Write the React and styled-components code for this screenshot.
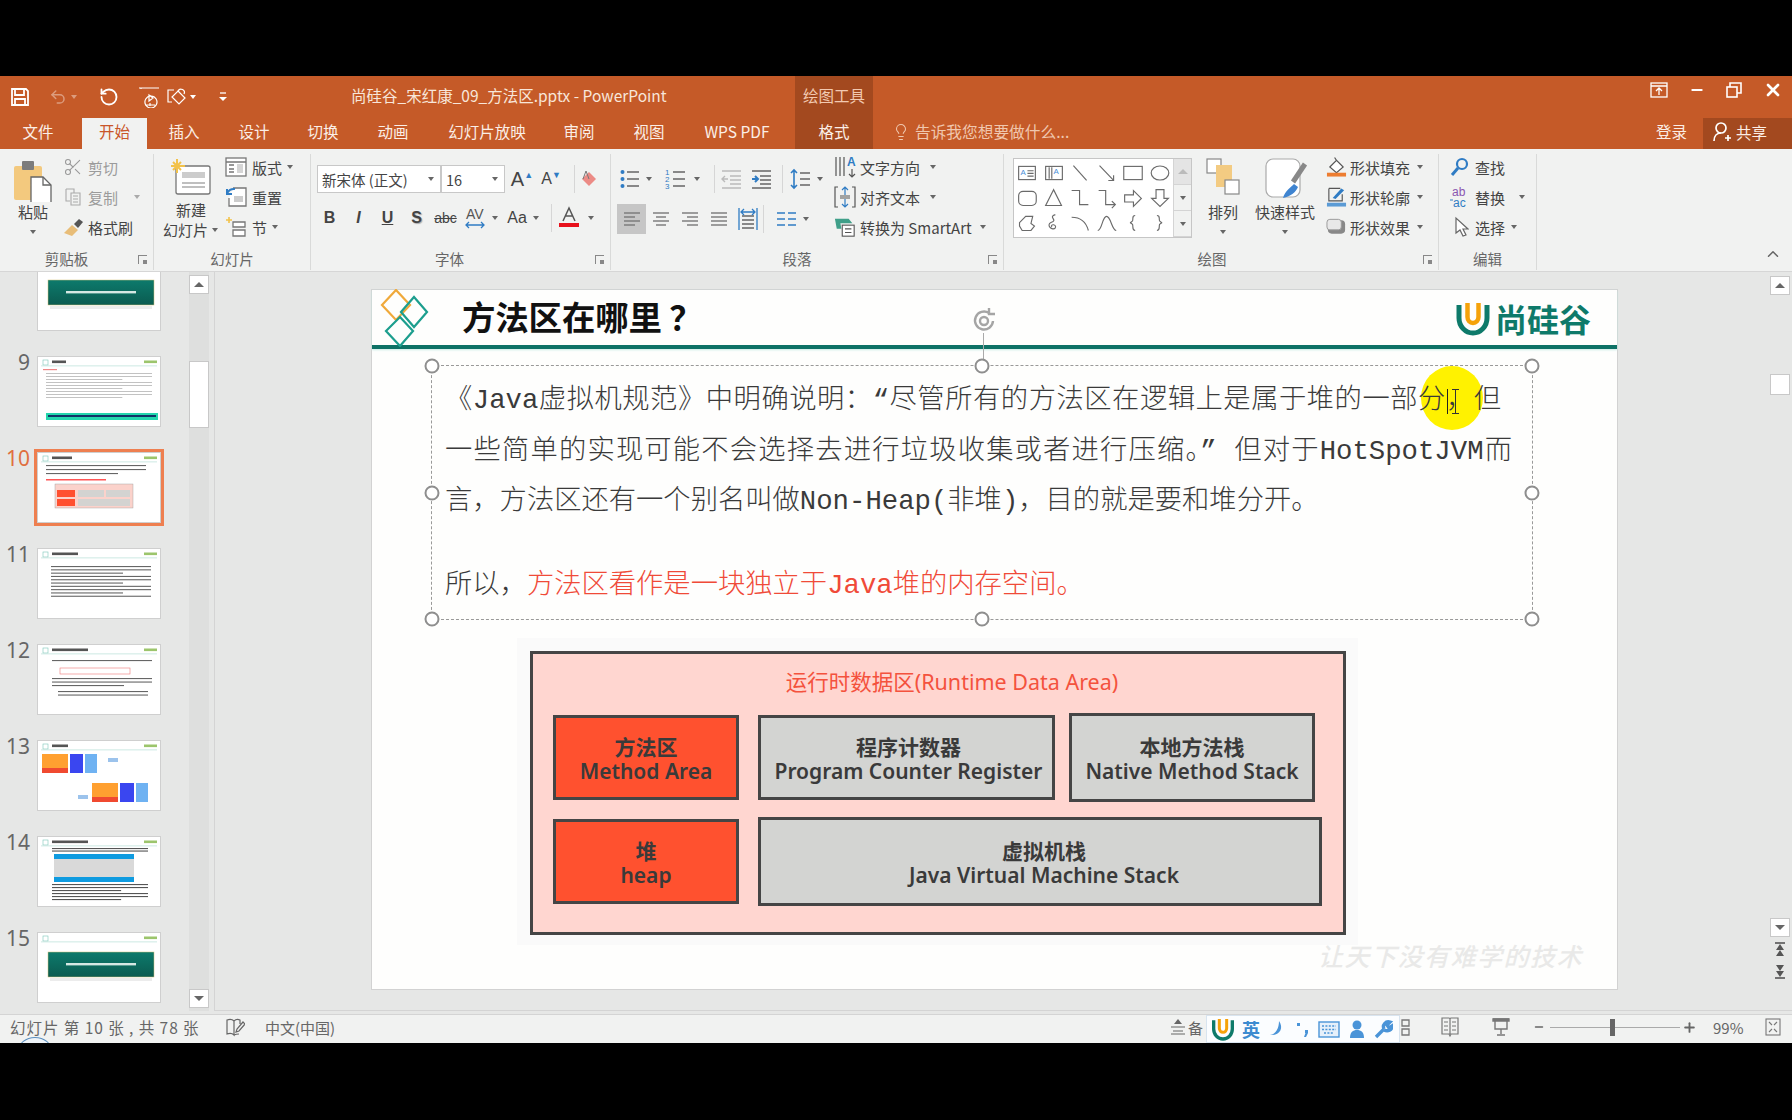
import React from "react";
import styled, { createGlobalStyle } from "styled-components";
import { Undo2, RotateCcw, Scissors, Lightbulb, X, Minus, ChevronUp, Plus } from "lucide-react";

const GlobalStyle = createGlobalStyle`
  html, body { margin: 0; padding: 0; background: #000; }
  * { box-sizing: border-box; }
  body { font-family: "Noto Sans CJK SC", "Noto Sans", sans-serif; }
`;

const Page = styled.div`
  width: 1792px;
  height: 1120px;
  padding-top: 76px;
  background: #000;
  overflow: hidden;
`;
const Win = styled.div`
  width: 1792px;
  height: 967px;
  display: flex;
  flex-direction: column;
  background: #e6e7e6;
`;

/* title bar + tabs */
const TitleBar = styled.div`
  height: 42px;
  display: flex;
  background: #c55a28;
  color: #f8e6da;
`;
const Qat = styled.div`
  width: 351px;
  padding-left: 10px;
  display: flex;
  align-items: center;
  color: #fff;
`;
const QatItem = styled.div`
  width: ${p => p.$w || 24}px;
  margin-left: ${p => p.$ml || 0}px;
  display: flex;
  align-items: center;
  justify-content: center;
  opacity: ${p => (p.$off ? 0.4 : 1)};
`;
const DocTitle = styled.div`
  width: 444px;
  font-size: 15.5px;
  line-height: 38px;
  white-space: nowrap;
`;
const ToolTitle = styled.div`
  width: 78px;
  text-align: center;
  font-size: 15.5px;
  line-height: 38px;
  background: #a3491f;
  color: #f2c9b1;
`;
const WinCtrls = styled.div`
  margin-left: auto;
  display: flex;
  align-items: center;
  padding: 0 9px 14px 0;
  gap: 21px;
  color: #fff;
`;
const TabBar = styled.div`
  height: 31px;
  display: flex;
  background: #c55a28;
  color: #fbeee6;
`;
const Tab = styled.div`
  width: ${p => p.$w}px;
  padding-right: ${p => p.$pr || 0}px;
  text-align: center;
  font-size: 15.5px;
  line-height: 26px;
  white-space: nowrap;
  background: ${p => (p.$active ? "#f1f2f1" : p.$tool ? "#a3491f" : "transparent")};
  color: ${p => (p.$active ? "#c9562a" : "#fbeee6")};
`;
const Hint = styled.div`
  margin-left: 19px;
  padding-bottom: 4px;
  display: flex;
  align-items: center;
  gap: 5px;
  font-size: 15.7px;
  color: #f0c7ae;
`;
const Login = styled.div`
  margin-left: auto;
  width: 47px;
  font-size: 15.5px;
  line-height: 26px;
`;
const Share = styled.div`
  width: 89px;
  display: flex;
  align-items: center;
  gap: 4px;
  padding: 0 0 3px 9px;
  font-size: 15.5px;
  background: #a3491f;
`;

/* ribbon */
const Ribbon = styled.div`
  position: relative;
  height: 123px;
  padding-top: 5px;
  display: flex;
  background: #f1f2f1;
  border-bottom: 1px solid #d6d6d6;
  color: #444;
`;
const Group = styled.div`
  position: relative;
  width: ${p => p.$w}px;
  height: 116px;
  display: flex;
  flex-direction: column;
  border-right: 1px solid #d9dad9;
`;
const Body = styled.div`
  height: 95px;
  display: flex;
  padding-left: ${p => p.$pl || 0}px;
`;
const GroupLabel = styled.div`
  height: 21px;
  padding-right: ${p => p.$pr || 0}px;
  text-align: center;
  font-size: 14.5px;
  line-height: 20px;
  color: #666;
`;
const Launcher = styled.div`
  position: absolute;
  right: 6px;
  bottom: 6px;
  width: 9px;
  height: 9px;
  border-left: 1px solid #888;
  border-top: 1px solid #888;
  &::after {
    content: "";
    position: absolute;
    right: 0;
    bottom: 0;
    width: 4px;
    height: 4px;
    background: #888;
  }
`;
const Big = styled.div`
  width: ${p => p.$w}px;
  margin-left: ${p => p.$ml || 0}px;
  display: flex;
  flex-direction: column;
  align-items: center;
  padding-top: ${p => p.$pt ?? 6}px;
  font-size: 15px;
  line-height: 20px;
  text-align: center;
  white-space: nowrap;
`;
const BigIcon = styled.div`
  height: 40px;
  margin-bottom: 2px;
`;
const BigLine = styled.div`
  height: 20px;
  margin-top: ${p => p.$mt || 0}px;
  display: flex;
  align-items: center;
  justify-content: center;
  gap: 3px;
`;
const Col = styled.div`
  width: ${p => (p.$w ? `${p.$w}px` : "auto")};
  margin-left: ${p => p.$ml || 0}px;
  display: flex;
  flex-direction: column;
`;
const Small = styled.div`
  height: 30px;
  padding-bottom: 4px;
  display: flex;
  align-items: center;
  gap: ${p => p.$gap ?? 4}px;
  font-size: 15px;
  white-space: nowrap;
  color: ${p => (p.$off ? "#9b9b9b" : "#444")};
`;
const IconBox = styled.div`
  width: ${p => p.$w || 22}px;
  display: flex;
  justify-content: center;
  align-items: center;
  flex: none;
`;
const Caret = styled.span`
  display: inline-flex;
  justify-content: center;
  width: ${p => p.$w || 10}px;
  margin-left: ${p => p.$ml || 0}px;
  flex: none;
  &::after {
    content: "";
    border-left: 3.5px solid transparent;
    border-right: 3.5px solid transparent;
    border-top: 4px solid ${p => (p.$off ? "#aaa" : p.$white ? "#fff" : "#666")};
  }
`;
const ToolRow = styled.div`
  display: flex;
  align-items: center;
  height: ${p => p.$h}px;
  margin-top: ${p => p.$mt || 0}px;
  margin-left: ${p => p.$ml || 0}px;
  padding-left: ${p => p.$pl || 0}px;
`;
const Tool = styled.div`
  width: ${p => p.$w || 28}px;
  height: 30px;
  margin-left: ${p => p.$ml || 0}px;
  display: flex;
  align-items: center;
  justify-content: center;
  flex: none;
  background: ${p => (p.$on ? "#c6c6c6" : "transparent")};
  font-family: "Liberation Sans", sans-serif;
  font-size: ${p => p.$fs || 16}px;
  font-weight: ${p => (p.$b ? 700 : 400)};
  font-style: ${p => (p.$i ? "italic" : "normal")};
  text-decoration: ${p => (p.$u ? "underline" : p.$s ? "line-through" : "none")};
  text-shadow: ${p => (p.$shadow ? "1px 1px 1px #aaa" : "none")};
`;
const GrowMark = styled.sup`
  font-size: 9px;
  color: #2f7cc4;
  margin-top: -8px;
`;
const Sep = styled.div`
  width: 1px;
  height: 28px;
  margin-left: ${p => p.$ml || 0}px;
  background: #d6d6d6;
  flex: none;
`;
const Combo = styled.div`
  width: ${p => p.$w}px;
  height: 28px;
  margin-left: ${p => p.$ml || 0}px;
  padding: 0 4px 0 4px;
  display: flex;
  align-items: center;
  justify-content: space-between;
  background: #fff;
  border: 1px solid #c8c8c8;
  font-size: 14.5px;
  white-space: nowrap;
  flex: none;
`;
const Gallery = styled.div`
  width: 179px;
  height: 80px;
  margin: 4px 0 0 9px;
  display: flex;
  background: #fff;
  border: 1px solid #c6c6c6;
`;
const ShapeGrid = styled.div`
  flex: 1;
  display: grid;
  grid-template-columns: repeat(6, 1fr);
  grid-template-rows: repeat(3, 1fr);
  padding: 1px 0;
  place-items: center;
  color: #666;
`;
const GalleryScroll = styled.div`
  width: 18px;
  display: flex;
  flex-direction: column;
  border-left: 1px solid #d4d4d4;
  background: #f1f2f1;
`;
const GalleryBtn = styled.div`
  flex: 1;
  display: flex;
  align-items: center;
  justify-content: center;
  background: ${p => (p.$dark ? "#e4e4e4" : "transparent")};
  border-bottom: 1px solid #d4d4d4;
  color: #666;
  font-size: 8px;
`;
const Collapse = styled.div`
  position: absolute;
  right: 10px;
  bottom: 3px;
  color: #666;
`;

/* main area */
const Main = styled.div`
  height: 742px;
  display: flex;
`;
const Side = styled.div`
  width: 215px;
  flex: none;
  display: flex;
  border-right: 1px solid #d4d4d4;
  margin-bottom: 3px;
  overflow: hidden;
`;
const ThumbList = styled.div`
  width: 189px;
  margin-top: -12px;
  display: flex;
  flex-direction: column;
  gap: 25px;
`;
const ThumbRow = styled.div`
  height: 71px;
  display: flex;
  flex: none;
`;
const ThumbNum = styled.div`
  width: 30px;
  text-align: right;
  font-family: "Noto Sans", sans-serif;
  font-size: 21px;
  line-height: 26px;
  margin-top: -7px;
  color: ${p => (p.$on ? "#e0703f" : "#666")};
`;
const ThumbFrame = styled.div`
  width: 124px;
  height: 71px;
  margin-left: 7px;
  background: #fff;
  border: 1px solid #cfcfcf;
  outline: ${p => (p.$on ? "3px solid #ee7f50" : "none")};
  svg { display: block; filter: blur(0.45px); }
`;
const Scroll = styled.div`
  width: 20px;
  display: flex;
  flex-direction: column;
  align-items: stretch;
  background: #dedfde;
`;
const ScrollBtn = styled.div`
  height: ${p => p.$h || 19}px;
  margin-top: ${p => (p.$auto ? "auto" : `${p.$mt || 0}px`)};
  margin-bottom: ${p => p.$mb || 0}px;
  background: #fff;
  border: 1px solid #c8c8c8;
  display: flex;
  align-items: center;
  justify-content: center;
  flex: none;
  color: #666;
`;
const Tri = styled.span`
  border-left: 5px solid transparent;
  border-right: 5px solid transparent;
  border-${p => (p.$down ? "top" : "bottom")}: 5px solid ${p => p.$color || "#666"};
`;
const SlideArea = styled.div`
  flex: 1;
  display: flex;
  margin-bottom: 3px;
  border-bottom: 1px solid #d4d4d4;
`;
const Viewport = styled.div`
  width: 1555px;
  padding: 17px 0 0 156px;
`;
const RightScroll = styled.div`
  width: 20px;
  display: flex;
  flex-direction: column;
  align-items: stretch;
`;
const DoubleArrow = styled.div`
  height: 21px;
  margin-top: ${p => p.$mt || 0}px;
  display: flex;
  justify-content: center;
  align-items: center;
`;

/* slide */
const Slide = styled.div`
  position: relative;
  width: 1247px;
  height: 701px;
  background: #fefefd;
  border: 1px solid #d2d2d2;
`;
const SlideHeader = styled.div`
  height: 59px;
  display: flex;
  align-items: center;
  border-bottom: 4px solid #0e7266;
  box-shadow: 0 1px 2px #c9ece6;
`;
const LogoDiamonds = styled.svg`
  margin-left: 6px;
  flex: none;
`;
const SlideTitle = styled.div`
  margin-left: 22px;
  padding-bottom: 4px;
  font-size: 33.5px;
  font-weight: 700;
  color: #111;
  letter-spacing: -0.2px;
  white-space: pre;
`;
const LogoWrap = styled.div`
  margin-left: auto;
  margin-right: 26px;
  display: flex;
  align-items: center;
`;
const LogoText = styled.div`
  margin-left: 4px;
  font-size: 32px;
  font-weight: 700;
  line-height: 32px;
  color: #0e7a6a;
`;
const RotateHandle = styled.div`
  position: absolute;
  left: 600px;
  top: 16px;
  color: #999;
  &::after {
    content: "";
    position: absolute;
    left: 11px;
    top: 27px;
    width: 1px;
    height: 34px;
    background: #aaa;
  }
`;
const Frame = styled.div`
  position: relative;
  width: 1102px;
  height: 255px;
  margin: 16px 0 0 59px;
  padding: 10px 0 0 13px;
  border: 1px dashed #999;
`;
const Handle = styled.div`
  position: absolute;
  left: ${p => p.$x}%;
  top: ${p => p.$y}%;
  width: 15px;
  height: 15px;
  transform: translate(-50%, -50%);
  border-radius: 50%;
  background: #fff;
  border: 2.5px solid #8e8e8e;
`;
const Spot = styled.div`
  position: absolute;
  left: 989px;
  top: 0;
  width: 62px;
  height: 64px;
  border-radius: 50%;
  background: #fff200;
`;
const CaretLine = styled.div`
  position: absolute;
  left: 1015px;
  top: 23px;
  width: 1px;
  height: 25px;
  background: #222;
`;
const IBeam = styled.div`
  position: absolute;
  left: 1020px;
  top: 23px;
  width: 7px;
  height: 25px;
  border-top: 1px solid #333;
  border-bottom: 1px solid #333;
  &::after {
    content: "";
    position: absolute;
    left: 3px;
    top: 0;
    width: 1px;
    height: 100%;
    background: #333;
  }
`;
const Line = styled.div`
  position: relative;
  width: ${p => (p.$w ? `${p.$w}px` : "auto")};
  height: 50.5px;
  margin-top: ${p => p.$mt || 0}px;
  font-family: "Liberation Mono", "Noto Sans CJK SC", monospace;
  font-size: 27.3px;
  font-weight: 300;
  line-height: 50.5px;
  color: #3a3a3a;
  text-align: ${p => (p.$w ? "justify" : "left")};
  text-align-last: ${p => (p.$w ? "justify" : "left")};
`;
const Red = styled.span`
  color: #f04a38;
`;
const DiagramWrap = styled.div`
  width: 841px;
  height: 307px;
  margin: 18px 0 0 145px;
  padding: 13px 0 0 13px;
  background: #fafafa;
`;
const Diagram = styled.div`
  width: 816px;
  height: 284px;
  padding-left: 20px;
  background: #ffd6d0;
  border: 3px solid #454545;
`;
const DiagramTitle = styled.div`
  height: 59px;
  padding-left: 8px;
  text-align: center;
  font-family: "Noto Sans", "Noto Sans CJK SC", sans-serif;
  font-size: 21.5px;
  line-height: 56px;
  color: #f4523d;
  white-space: nowrap;
`;
const DiagramRow = styled.div`
  height: 89px;
  margin-top: ${p => p.$mt || 0}px;
  display: flex;
  align-items: center;
`;
const Cell = styled.div`
  width: ${p => p.$w}px;
  height: ${p => p.$h}px;
  margin-left: ${p => p.$ml || 0}px;
  padding: 2px 0 0 ${p => p.$pl || 0}px;
  display: flex;
  flex-direction: column;
  align-items: center;
  justify-content: center;
  flex: none;
  background: ${p => (p.$red ? "#ff512f" : "#d3d4d2")};
  border: 3px solid #454545;
  font-family: "Noto Sans", "Noto Sans CJK SC", sans-serif;
  font-size: 21px;
  font-weight: 600;
  line-height: 24px;
  color: #3a3a3a;
  white-space: nowrap;
`;
const Watermark = styled.div`
  position: absolute;
  right: 34px;
  bottom: 16px;
  font-size: 25px;
  font-style: italic;
  font-weight: 500;
  letter-spacing: 1.5px;
  color: #e9e9e8;
`;

/* status bar */
const Status = styled.div`
  height: 29px;
  padding-bottom: 4px;
  display: flex;
  align-items: center;
  position: relative;
  overflow: hidden;
  background: #f1f2f1;
  border-top: 1px solid #d4d4d4;
  color: #666;
  font-size: 15px;
  white-space: nowrap;
`;
const StatusText = styled.div`
  width: ${p => p.$w}px;
  margin-left: ${p => p.$ml || 0}px;
  flex: none;
  letter-spacing: ${p => p.$ls || 0}px;
  font-size: ${p => p.$fs || 15}px;
`;
const StatusIcon = styled.div`
  margin-left: ${p => p.$ml || 0}px;
  display: flex;
  flex: none;
`;
const Arc = styled.div`
  position: absolute;
  left: 18px;
  bottom: -22px;
  width: 34px;
  height: 28px;
  border-radius: 50%;
  border: 1px solid #5a8fbf;
  background: #eef3f8;
`;
const Ime = styled.div`
  width: 194px;
  height: 28px;
  margin: 4px 0 0 0;
  display: flex;
  align-items: center;
  padding-left: 4px;
  gap: 7px;
  flex: none;
  background: #fbfdff;
  border: 1px solid #d8e4ef;
  color: #3d8bd0;
`;
const ImeText = styled.span`
  font-size: 18px;
  font-weight: 700;
  line-height: 1;
`;
const ZoomTrack = styled.div`
  position: relative;
  width: 130px;
  height: 1px;
  margin-left: 5px;
  background: #aaa;
  flex: none;
`;
const ZoomKnob = styled.div`
  position: absolute;
  left: 60px;
  top: -8px;
  width: 5px;
  height: 17px;
  background: #666;
`;

const Ic = ({ w = 20, h = 20, vb, children, sw = 1.3, color = "currentColor" }) => (
  <svg width={w} height={h} viewBox={vb || `0 0 ${w} ${h}`} fill="none" stroke={color} strokeWidth={sw}>{children}</svg>
);

const shapes = [
  <g key="a"><rect x="3" y="5" width="19" height="15" /><text x="5" y="15" fontSize="9" fill="#4a90d9" stroke="none" fontFamily="Liberation Sans">A</text><path d="M13 10h7M13 13h7M13 16h7" /></g>,
  <g key="b"><rect x="3" y="5" width="19" height="15" /><path d="M7 6v13M10 6v13" /><text x="12" y="14" fontSize="9" fill="#4a90d9" stroke="none" fontFamily="Liberation Sans">A</text></g>,
  <path key="c" d="M5 4l15 17" />,
  <path key="d" d="M4 4l16 17M20 15v6h-6" />,
  <rect key="e" x="2" y="5" width="21" height="15" />,
  <ellipse key="f" cx="12.5" cy="12.5" rx="10" ry="8" />,
  <rect key="g" x="3" y="5" width="20" height="16" rx="5" />,
  <path key="h" d="M12 3L3 21h18z" />,
  <path key="i" d="M3 4h9v16h10" />,
  <path key="j" d="M3 4h8v16h11M18 16l4 4-4 4" />,
  <path key="k" d="M3 9h10V4l9 9-9 9v-5H3z" />,
  <path key="l" d="M8 3h9v10h5l-9.5 9L3 13h5z" />,
  <path key="m" d="M4 12l7-7h8l-2 8 4 3-4 5H7l-3-5z" />,
  <path key="n" d="M14 3C5 6 18 9 9 12c-6 3 2 10 5 6 2-4-6-5-4-1" />,
  <path key="o" d="M3 6c9 0 16 4 19 15" />,
  <path key="p" d="M2 21C7 21 7 5 12 5s6 16 11 16" />,
  <path key="q" d="M15 4c-4 0-2 3-3 6-1 1-2 2-3 2 1 0 2 1 3 2 1 3-1 7 3 7" />,
  <path key="r" d="M9 4c4 0 2 3 3 6 1 1 2 2 3 2-1 0-2 1-3 2-1 3 1 7-3 7" />,
];

const Lines = ({ y, rows, x = 13, w = 98, color = "#888", gap = 3.2, h = 1.1 }) =>
  Array.from({ length: rows }).map((_, i) => (
    <rect key={i} x={x} y={y + i * gap} width={i % 3 === 2 ? w * 0.72 : w} height={h} fill={color} />
  ));

const ThumbHead = ({ title = 30 }) => (
  <>
    <rect x="5" y="3" width="5" height="5" fill="none" stroke="#7cc6b8" strokeWidth="0.6" />
    <rect x="14" y="3.5" width={title} height="2.6" fill="#555" />
    <rect x="106" y="3.5" width="13" height="2.6" fill="#9cc56c" />
    <rect x="3" y="8.5" width="116" height="0.8" fill="#bfe3dc" />
  </>
);

const Thumb = ({ kind, id }) => (
  <svg width="122" height="69" viewBox="0 0 122 69">
    {kind === "banner" && (
      <>
        <defs>
          <linearGradient id={id} x1="0" y1="0" x2="0" y2="1">
            <stop offset="0" stopColor="#0d7a6c" /><stop offset="1" stopColor="#0b5b50" />
          </linearGradient>
        </defs>
        {id === "bn2" && <ThumbHead title={0} />}
        <rect x="10" y="19" width="106" height="25" fill={`url(#${id})`} stroke="#d8c27a" strokeWidth="0.5" />
        <rect x="28" y="30" width="70" height="2.4" fill="#d5e8e3" />
        <rect x="12" y="45" width="102" height="3" fill="#ececec" />
      </>
    )}
    {kind === "nine" && (
      <>
        <ThumbHead title={14} />
        <rect x="5" y="12" width="14" height="1.2" fill="#e88" />
        <Lines y={16} rows={9} color="#c2c2c2" gap={3} w={106} x={8} h={1} />
        <rect x="8" y="56" width="112" height="7" fill="#24d6ad" />
        <rect x="10" y="58" width="108" height="2" fill="#136" />
      </>
    )}
    {kind === "ten" && (
      <>
        <ThumbHead title={20} />
        <Lines y={12} rows={3} color="#666" gap={4} w={100} x={8} />
        <rect x="8" y="26" width="60" height="1.5" fill="#f55" />
        <rect x="17" y="31" width="78" height="24" fill="#fbd2cb" stroke="#999" strokeWidth="0.4" />
        <rect x="19" y="37" width="18" height="7" fill="#ff5030" />
        <rect x="19" y="46" width="18" height="7" fill="#ff5030" />
        <rect x="40" y="37" width="26" height="7" fill="#d3d3d1" />
        <rect x="68" y="37" width="24" height="7" fill="#d3d3d1" />
        <rect x="40" y="46" width="52" height="7" fill="#d3d3d1" />
      </>
    )}
    {kind === "eleven" && (
      <>
        <ThumbHead title={26} />
        <Lines y={17} rows={10} color="#666" gap={3.3} w={100} x={13} />
      </>
    )}
    {kind === "twelve" && (
      <>
        <ThumbHead title={36} />
        <Lines y={15} rows={1} color="#666" w={100} x={14} />
        <rect x="22" y="23" width="70" height="6" fill="#fff" stroke="#e77" strokeWidth="0.6" />
        <Lines y={33} rows={3} color="#666" w={100} x={14} gap={3.5} />
        <Lines y={46} rows={2} color="#666" w={90} x={20} gap={3.5} />
      </>
    )}
    {kind === "thirteen" && (
      <>
        <ThumbHead title={16} />
        <rect x="4" y="13" width="26" height="14" fill="#ffa030" />
        <rect x="4" y="27" width="26" height="5" fill="#f04a30" />
        <rect x="32" y="13" width="13" height="19" fill="#3a46f0" />
        <rect x="47" y="13" width="12" height="19" fill="#6fb2f2" />
        <rect x="70" y="17" width="10" height="4" fill="#9cc3ec" />
        <rect x="54" y="42" width="26" height="14" fill="#ffa030" />
        <rect x="54" y="56" width="26" height="5" fill="#f04a30" />
        <rect x="82" y="42" width="14" height="19" fill="#3a46f0" />
        <rect x="98" y="42" width="12" height="19" fill="#6fb2f2" />
        <rect x="40" y="54" width="10" height="4" fill="#9cc3ec" />
      </>
    )}
    {kind === "fourteen" && (
      <>
        <ThumbHead title={36} />
        <Lines y={11} rows={2} color="#555" w={96} x={14} gap={2.5} />
        <rect x="16" y="17" width="80" height="5" fill="#0f9be0" />
        <rect x="16" y="22" width="80" height="18" fill="#d9d9d9" />
        <rect x="16" y="40" width="80" height="5" fill="#0f9be0" />
        <Lines y={47} rows={6} color="#555" w={96} x={14} gap={3} />
      </>
    )}
  </svg>
);

const thumbs = [
  { n: "", kind: "banner", id: "bn1" },
  { n: "9", kind: "nine" },
  { n: "10", kind: "ten", on: true },
  { n: "11", kind: "eleven" },
  { n: "12", kind: "twelve" },
  { n: "13", kind: "thirteen" },
  { n: "14", kind: "fourteen" },
  { n: "15", kind: "banner", id: "bn2" },
];

const LogoMark = ({ s = 36 }) => (
  <svg width={s} height={s} viewBox="0 0 36 36" fill="none">
    <path d="M4 5v13a14 15 0 0 0 28 0V5" stroke="#0e7a6a" strokeWidth="5" />
    <path d="M12.5 3v14a5.5 6 0 0 0 11 0V3" stroke="#f5a20a" strokeWidth="4.5" />
  </svg>
);

const AlignIcon = ({ rows }) => (
  <Ic w={20} h={18} sw={1.4} color="#777">
    {rows.map((r, i) => <path key={i} d={`M${r[0]} ${3 + i * 4}h${r[1]}`} />)}
  </Ic>
);

export default function App() {
  return (
    <Page>
      <GlobalStyle />
      <Win>
        <TitleBar>
          <Qat>
            <QatItem $w={20}>
              <Ic w={20} h={20} sw={1.8} color="#fff">
                <path d="M2 2h14l2 2v14H2z" /><path d="M5 2v6h9V2M5 18v-6h10v6" />
              </Ic>
            </QatItem>
            <QatItem $ml={16} $off><Undo2 size={18} /></QatItem>
            <QatItem $w={8} $off><Caret $w={8} $white /></QatItem>
            <QatItem $ml={19}><RotateCcw size={20} strokeWidth={2.2} /></QatItem>
            <QatItem $ml={15} $w={26}>
              <Ic w={26} h={22} sw={1.2} color="#fff">
                <path d="M3 2h20M5 2v1M15 10a6 6 0 1 1-.1 0zM9 19h10M14 17v3M13 9l4 3-4 3z" />
              </Ic>
            </QatItem>
            <QatItem $ml={3} $w={24}>
              <Ic w={24} h={22} sw={1.2} color="#fff">
                <path d="M9 4H3v12h4M13 5l7 7-6 6-7-7z" /><path d="M13 5a3 3 0 0 1 6 3" />
              </Ic>
            </QatItem>
            <QatItem $w={8}><Caret $w={8} $white /></QatItem>
            <QatItem $ml={21} $w={10}>
              <Ic w={10} h={12} color="#fff"><path d="M2 2h6" /><path d="M1 6h8l-4 4z" fill="#fff" stroke="none" /></Ic>
            </QatItem>
          </Qat>
          <DocTitle>尚硅谷_宋红康_09_方法区.pptx - PowerPoint</DocTitle>
          <ToolTitle>绘图工具</ToolTitle>
          <WinCtrls>
            <Ic w={18} h={16} color="#fff"><rect x="1" y="1" width="16" height="14" /><path d="M1 4h16M9 13V7M6 9l3-3 3 3" /></Ic>
            <Minus size={16} strokeWidth={3} />
            <Ic w={16} h={16} sw={1.6} color="#fff"><rect x="1" y="5" width="10" height="10" /><path d="M4 5V1h11v10h-4" /></Ic>
            <X size={20} strokeWidth={3.2} />
          </WinCtrls>
        </TitleBar>
        <TabBar>
          <Tab $w={82} $pr={6}>文件</Tab>
          <Tab $w={65} $active>开始</Tab>
          <Tab $w={74}>插入</Tab>
          <Tab $w={66}>设计</Tab>
          <Tab $w={72}>切换</Tab>
          <Tab $w={68}>动画</Tab>
          <Tab $w={120}>幻灯片放映</Tab>
          <Tab $w={64}>审阅</Tab>
          <Tab $w={76}>视图</Tab>
          <Tab $w={108} $pr={8}>WPS PDF</Tab>
          <Tab $w={78} $tool>格式</Tab>
          <Hint><Lightbulb size={18} strokeWidth={1.4} />告诉我您想要做什么...</Hint>
          <Login>登录</Login>
          <Share>
            <Ic w={20} h={22} sw={1.7} color="#fff">
              <circle cx="9" cy="7" r="5" /><path d="M2 20c0-5 3-8 7-8M13 17h6M16 14v6" />
            </Ic>
            共享
          </Share>
        </TabBar>

        <Ribbon>
          <Group $w={154}>
            <Body $pl={4}>
              <Big $w={58}>
                <BigIcon>
                  <Ic w={40} h={42}>
                    <rect x="1" y="6" width="28" height="34" rx="2" fill="#f3c97e" stroke="none" />
                    <rect x="9" y="1" width="12" height="9" rx="1" fill="#7c7c7c" stroke="none" />
                    <path d="M18 17h12l8 8v19H18z" fill="#fff" stroke="#666" />
                    <path d="M30 17v8h8" stroke="#666" />
                  </Ic>
                </BigIcon>
                <BigLine>粘贴</BigLine>
                <BigLine><Caret /></BigLine>
              </Big>
              <Col>
                <Small $off>
                  <IconBox><Scissors size={20} color="#999" strokeWidth={1.3} /></IconBox>剪切
                </Small>
                <Small $off>
                  <IconBox>
                    <Ic w={20} h={20} sw={1.1} color="#aaa"><path d="M3 2h8v4M3 2v12h4" /><path d="M8 6h9v12H8zM10 9h5M10 12h5M10 15h5" /></Ic>
                  </IconBox>
                  复制<Caret $off $ml={10} />
                </Small>
                <Small>
                  <IconBox>
                    <Ic w={22} h={20} sw={0}>
                      <path d="M2 16l8-8 6 5-6 6z" fill="#e8bd78" />
                      <path d="M12 7l5-5 4 3-5 6z" fill="#555" />
                    </Ic>
                  </IconBox>
                  格式刷
                </Small>
              </Col>
            </Body>
            <GroupLabel $pr={20}>剪贴板</GroupLabel>
            <Launcher />
          </Group>

          <Group $w={157}>
            <Body $pl={4}>
              <Big $w={66} $pt={4}>
                <BigIcon>
                  <Ic w={42} h={42}>
                    <rect x="6" y="8" width="34" height="28" rx="2" fill="#fff" stroke="#777" />
                    <rect x="12" y="14" width="23" height="6" fill="#ccc" stroke="none" />
                    <path d="M12 25h23M12 29h23" stroke="#aaa" />
                    <path d="M7 1v14M1 8h14M3 4l8 8M11 4l-8 8" stroke="#f2c24a" strokeWidth="2" />
                  </Ic>
                </BigIcon>
                <BigLine>新建</BigLine>
                <BigLine>幻灯片<Caret $w={8} /></BigLine>
              </Big>
              <Col>
                <Small>
                  <IconBox $w={24}>
                    <Ic w={24} h={22} color="#777"><rect x="2" y="2" width="20" height="18" fill="#fff" /><path d="M2 6h20M5 9h5M5 13h5M5 16h5" /><rect x="13" y="8" width="6" height="9" fill="#d5d5d5" stroke="none" /></Ic>
                  </IconBox>
                  版式<Caret $w={8} />
                </Small>
                <Small>
                  <IconBox $w={24}>
                    <Ic w={24} h={22} color="#777"><path d="M9 2H22v18H5v-8" fill="#fff" /><path d="M3 8a7 7 0 0 1 8-5M3 3v5h5" stroke="#2f7cc4" strokeWidth="2" /><rect x="10" y="10" width="9" height="6" fill="#ccc" stroke="none" /></Ic>
                  </IconBox>
                  重置
                </Small>
                <Small>
                  <IconBox $w={24}>
                    <Ic w={24} h={22} color="#777"><path d="M5 1v6M2 4h6" stroke="#f2c24a" strokeWidth="1.6" /><path d="M9 6h12v5H9zM9 14h12v6H9z" fill="#fff" /></Ic>
                  </IconBox>
                  节<Caret $w={8} />
                </Small>
              </Col>
            </Body>
            <GroupLabel>幻灯片</GroupLabel>
          </Group>

          <Group $w={300}>
            <Body $pl={6}>
              <Col>
                <ToolRow $h={28} $mt={11}>
                  <Combo $w={124}>新宋体 (正文)<Caret $w={10} /></Combo>
                  <Combo $w={64}>16<Caret $w={10} /></Combo>
                  <Tool $ml={3} $fs={20}>A<GrowMark>▲</GrowMark></Tool>
                  <Tool $ml={1} $fs={16}>A<GrowMark>▼</GrowMark></Tool>
                  <Sep $ml={9} />
                  <Tool $ml={1}>
                    <Ic w={22} h={22} sw={0}>
                      <path d="M3 11l7-7 7 7-7 7z" fill="#ec8b86" />
                      <path d="M7 3l-3 8M7 3l3 8" stroke="#777" strokeWidth="1" />
                    </Ic>
                  </Tool>
                </ToolRow>
                <ToolRow $h={30} $mt={10} $ml={-2}>
                  <Tool $w={29} $b>B</Tool>
                  <Tool $w={29} $i $b>I</Tool>
                  <Tool $w={29} $u $b>U</Tool>
                  <Tool $w={29} $b $shadow>S</Tool>
                  <Tool $w={29} $s $fs={14}>abc</Tool>
                  <Tool $w={29} $fs={14}>
                    <Ic w={24} h={24} sw={1.3} color="#2f7cc4">
                      <text x="3" y="13" fontSize="14" fill="#555" stroke="none" fontFamily="Liberation Sans">AV</text>
                      <path d="M3 19h18M6 16l-3 3 3 3M18 16l3 3-3 3" />
                    </Ic>
                  </Tool>
                  <Caret $w={10} $ml={1} />
                  <Tool $w={28} $ml={3} $fs={16}>Aa</Tool>
                  <Caret $w={10} />
                  <Sep $ml={10} />
                  <Tool $ml={3} $w={28}>
                    <Ic w={22} h={24} sw={1.5} color="#555">
                      <path d="M5 15l6-13 6 13M7.5 10h7" />
                      <rect x="1" y="17" width="20" height="4" fill="#e8111c" stroke="none" />
                    </Ic>
                  </Tool>
                  <Caret $w={10} $ml={3} />
                </ToolRow>
              </Col>
            </Body>
            <GroupLabel $pr={22}>字体</GroupLabel>
            <Launcher />
          </Group>

          <Group $w={393}>
            <Body $pl={5}>
              <Col $w={218}>
                <ToolRow $h={30} $mt={10}>
                  <Tool>
                    <Ic w={22} h={22} sw={1.4} color="#666">
                      <path d="M8 4h12M8 11h12M8 18h12" />
                      <circle cx="3.5" cy="4" r="2" fill="#2f7cc4" stroke="none" />
                      <circle cx="3.5" cy="11" r="2" fill="#2f7cc4" stroke="none" />
                      <circle cx="3.5" cy="18" r="2" fill="#2f7cc4" stroke="none" />
                    </Ic>
                  </Tool>
                  <Caret />
                  <Tool $ml={7}>
                    <Ic w={22} h={22} sw={1.4} color="#666">
                      <path d="M9 4h12M9 11h12M9 18h12" />
                      <text x="1" y="7" fontSize="8" fill="#2f7cc4" stroke="none" fontFamily="Liberation Sans">1</text>
                      <text x="1" y="14" fontSize="8" fill="#2f7cc4" stroke="none" fontFamily="Liberation Sans">2</text>
                      <text x="1" y="21" fontSize="8" fill="#2f7cc4" stroke="none" fontFamily="Liberation Sans">3</text>
                    </Ic>
                  </Tool>
                  <Caret $ml={3} />
                  <Sep $ml={12} />
                  <Tool $ml={2}>
                    <Ic w={22} h={22} sw={1.4} color="#bbb"><path d="M2 3h19M10 8h11M10 12h11M10 16h11M2 20h19M8 11H2M5 8l-3 3 3 3" /></Ic>
                  </Tool>
                  <Tool $ml={2}>
                    <Ic w={22} h={22} sw={1.4} color="#666">
                      <path d="M2 3h19M10 8h11M10 12h11M10 16h11M2 20h19" />
                      <path d="M2 11h6M5 8l3 3-3 3" stroke="#2f7cc4" strokeWidth="2" />
                    </Ic>
                  </Tool>
                  <Sep $ml={7} />
                  <Tool $ml={3}>
                    <Ic w={22} h={24} sw={1.4} color="#666">
                      <path d="M11 6h10M11 12h10M11 18h10" />
                      <path d="M5 3v18M2 6l3-3 3 3M2 18l3 3 3-3" stroke="#2f7cc4" strokeWidth="1.6" />
                    </Ic>
                  </Tool>
                  <Caret $ml={1} />
                </ToolRow>
                <ToolRow $h={30} $mt={10} $pl={1}>
                  <Tool $w={29} $on><AlignIcon rows={[[2, 16], [2, 11], [2, 16], [2, 11]]} /></Tool>
                  <Tool $w={29}><AlignIcon rows={[[2, 16], [5, 10], [2, 16], [5, 10]]} /></Tool>
                  <Tool $w={29}><AlignIcon rows={[[2, 16], [7, 11], [2, 16], [7, 11]]} /></Tool>
                  <Tool $w={29}><AlignIcon rows={[[2, 16], [2, 16], [2, 16], [2, 16]]} /></Tool>
                  <Tool $w={29}>
                    <Ic w={22} h={24} sw={1.3} color="#666">
                      <path d="M5 9h12M5 13h12M5 17h12M5 21h12" />
                      <path d="M2 1v22M20 1v22M4 5h14M7 2L4 5l3 3M15 2l3 3-3 3" stroke="#2f7cc4" />
                    </Ic>
                  </Tool>
                  <Sep $ml={1} />
                  <Tool $ml={8}>
                    <Ic w={22} h={20} sw={1.5} color="#2f7cc4"><path d="M2 4h8M2 10h8M2 16h8M13 4h8M13 10h8M13 16h8" /></Ic>
                  </Tool>
                  <Caret $ml={1} />
                </ToolRow>
              </Col>
              <Col>
                <Small>
                  <IconBox>
                    <Ic w={22} h={24} sw={1.2} color="#555">
                      <path d="M2 2v19M6 2v19M10 2v19" />
                      <text x="13" y="11" fontSize="12" fontWeight="700" fill="#2f7cc4" stroke="none" fontFamily="Liberation Sans">A</text>
                      <path d="M18 14v8M15 19l3 3 3-3" />
                    </Ic>
                  </IconBox>
                  文字方向<Caret $ml={4} />
                </Small>
                <Small>
                  <IconBox>
                    <Ic w={22} h={24} sw={1.2} color="#555">
                      <path d="M4 2H1v20h3M18 2h3v20h-3" />
                      <path d="M11 2v8M8 5l3-3 3 3M11 14v8M8 19l3 3 3-3" stroke="#2f7cc4" />
                      <path d="M6 11h10M6 13h10" />
                    </Ic>
                  </IconBox>
                  对齐文本<Caret $ml={4} />
                </Small>
                <Small>
                  <IconBox>
                    <Ic w={24} h={24} sw={1.2} color="#555">
                      <path d="M1 3h15l4 5H7l1 6H3z" fill="#3f9f89" stroke="none" />
                      <rect x="9" y="10" width="13" height="12" fill="#fff" />
                      <path d="M12 14h7M12 18h7" />
                    </Ic>
                  </IconBox>
                  转换为 SmartArt<Caret $ml={2} />
                </Small>
              </Col>
            </Body>
            <GroupLabel $pr={20}>段落</GroupLabel>
            <Launcher />
          </Group>

          <Group $w={435}>
            <Body>
              <Gallery>
                <ShapeGrid>
                  {shapes.map((s, i) => (
                    <Ic key={i} w={22} h={22} vb="0 0 25 25" sw={1.3} color="#6a6a6a">{s}</Ic>
                  ))}
                </ShapeGrid>
                <GalleryScroll>
                  <GalleryBtn $dark><Tri $color="#bbb" /></GalleryBtn>
                  <GalleryBtn><Caret /></GalleryBtn>
                  <GalleryBtn><Caret /></GalleryBtn>
                </GalleryScroll>
              </Gallery>
              <Big $w={50} $ml={6} $pt={2}>
                <BigIcon>
                  <Ic w={40} h={44} sw={1.2} color="#888">
                    <rect x="4" y="3" width="14" height="14" fill="#fff" />
                    <rect x="13" y="9" width="16" height="22" fill="#f3cb82" stroke="none" />
                    <rect x="22" y="24" width="14" height="14" fill="#fff" />
                  </Ic>
                </BigIcon>
                <BigLine $mt={4}>排列</BigLine>
                <BigLine><Caret /></BigLine>
              </Big>
              <Big $w={74} $pt={2}>
                <BigIcon>
                  <Ic w={48} h={44} sw={1.2} color="#aaa">
                    <rect x="5" y="3" width="34" height="38" rx="7" fill="#fff" />
                    <path d="M44 8l-12 18" stroke="#888" strokeWidth="5" />
                    <path d="M22 42c2-7 8-11 11-14l4 3c-2 5-7 9-15 11z" fill="#3f84d0" stroke="none" />
                  </Ic>
                </BigIcon>
                <BigLine $mt={4}>快速样式</BigLine>
                <BigLine><Caret /></BigLine>
              </Big>
              <Col $ml={4}>
                <Small $gap={3}>
                  <IconBox $w={21}>
                    <Ic w={22} h={22} sw={1.2} color="#555">
                      <path d="M4 11l7-7 7 7-7 6zM9 1l2 3" fill="#fff" />
                      <rect x="1" y="17" width="20" height="4" fill="#ed7d31" stroke="none" />
                    </Ic>
                  </IconBox>
                  形状填充<Caret $ml={2} />
                </Small>
                <Small $gap={3}>
                  <IconBox $w={21}>
                    <Ic w={22} h={22} sw={1.2} color="#555">
                      <path d="M3 2h12M3 2v13h14V8" />
                      <path d="M7 12l9-10 3 2-9 9z" fill="#2f7cc4" stroke="none" />
                      <rect x="1" y="17" width="20" height="4" fill="#5b9bd5" stroke="none" />
                    </Ic>
                  </IconBox>
                  形状轮廓<Caret $ml={2} />
                </Small>
                <Small $gap={3}>
                  <IconBox $w={21}>
                    <Ic w={22} h={20} sw={0}>
                      <rect x="2" y="3" width="18" height="14" rx="4" fill="#888" />
                      <rect x="1" y="2" width="15" height="11" rx="3" fill="#e8e8e8" stroke="#999" strokeWidth="1" />
                    </Ic>
                  </IconBox>
                  形状效果<Caret $ml={2} />
                </Small>
              </Col>
            </Body>
            <GroupLabel $pr={18}>绘图</GroupLabel>
            <Launcher />
          </Group>

          <Group $w={98}>
            <Body $pl={10}>
              <Col>
                <Small>
                  <IconBox>
                    <Ic w={20} h={20} sw={2.2} color="#2f7cc4"><circle cx="12" cy="7" r="5" /><path d="M8 11l-6 7" strokeWidth="3" /></Ic>
                  </IconBox>
                  查找
                </Small>
                <Small>
                  <IconBox>
                    <Ic w={22} h={24} sw={1}>
                      <text x="3" y="11" fontSize="12" fill="#8a56b0" stroke="none" fontFamily="Liberation Sans">ab</text>
                      <text x="4" y="22" fontSize="12" fill="#2f7cc4" stroke="none" fontFamily="Liberation Sans">ac</text>
                      <path d="M1 15h3" stroke="#2f7cc4" />
                    </Ic>
                  </IconBox>
                  替换<Caret $ml={8} />
                </Small>
                <Small>
                  <IconBox>
                    <Ic w={18} h={22} sw={1.2} color="#666"><path d="M5 2v15l4-3 3 6 3-1-3-6h5z" fill="#fff" /></Ic>
                  </IconBox>
                  选择<Caret />
                </Small>
              </Col>
            </Body>
            <GroupLabel>编辑</GroupLabel>
          </Group>
          <Collapse><ChevronUp size={18} strokeWidth={2} /></Collapse>
        </Ribbon>

        <Main>
          <Side>
            <ThumbList>
              {thumbs.map((t, i) => (
                <ThumbRow key={i}>
                  <ThumbNum $on={t.on}>{t.n}</ThumbNum>
                  <ThumbFrame $on={t.on}><Thumb kind={t.kind} id={t.id} /></ThumbFrame>
                </ThumbRow>
              ))}
            </ThumbList>
            <Scroll>
              <ScrollBtn $mt={3}><Tri /></ScrollBtn>
              <ScrollBtn $mt={67} $h={67} />
              <ScrollBtn $auto $mb={3}><Tri $down /></ScrollBtn>
            </Scroll>
          </Side>

          <SlideArea>
            <Viewport>
              <Slide>
                <SlideHeader>
                  <LogoDiamonds width="62" height="58" viewBox="0 0 62 58" fill="none" strokeWidth="2.2">
                    <path d="M18 1l14 15-14 15L4 16z" stroke="#f0a93a" />
                    <path d="M36 8l13 15-13 15-13-15z" stroke="#1c9e8e" />
                    <path d="M22 28l13 14-13 15L8 42z" stroke="#1c9e8e" />
                  </LogoDiamonds>
                  <SlideTitle>方法区在哪里 ？</SlideTitle>
                  <LogoWrap>
                    <LogoMark s={36} />
                    <LogoText>尚硅谷</LogoText>
                  </LogoWrap>
                </SlideHeader>
                <RotateHandle>
                  <Ic w={26} h={28} sw={2.4} color="#a5a5a5">
                    <path d="M21 15a9 9 0 1 1-4-8M17 2v6h6" />
                    <circle cx="12" cy="15" r="4" />
                  </Ic>
                </RotateHandle>
                <Frame>
                  <Spot />
                  <Line $w={1056}>《Java虚拟机规范》中明确说明：“尽管所有的方法区在逻辑上是属于堆的一部分，但</Line>
                  <Line $w={1067}>一些简单的实现可能不会选择去进行垃圾收集或者进行压缩。”  但对于HotSpotJVM而</Line>
                  <Line>言，方法区还有一个别名叫做Non-Heap(非堆)，目的就是要和堆分开。</Line>
                  <Line $mt={33}>所以，<Red>方法区看作是一块独立于Java堆的内存空间。</Red></Line>
                  <CaretLine />
                  <IBeam />
                  <Handle $x={0} $y={0} />
                  <Handle $x={50} $y={0} />
                  <Handle $x={100} $y={0} />
                  <Handle $x={0} $y={50} />
                  <Handle $x={100} $y={50} />
                  <Handle $x={0} $y={100} />
                  <Handle $x={50} $y={100} />
                  <Handle $x={100} $y={100} />
                </Frame>
                <DiagramWrap>
                  <Diagram>
                    <DiagramTitle>运行时数据区(Runtime Data Area)</DiagramTitle>
                    <DiagramRow>
                      <Cell $w={186} $h={85} $red><span>方法区</span><span>Method Area</span></Cell>
                      <Cell $w={297} $h={85} $ml={19} $pl={4}><span>程序计数器</span><span>Program Counter Register</span></Cell>
                      <Cell $w={246} $h={89} $ml={14}><span>本地方法栈</span><span>Native Method Stack</span></Cell>
                    </DiagramRow>
                    <DiagramRow $mt={15}>
                      <Cell $w={186} $h={85} $red><span>堆</span><span>heap</span></Cell>
                      <Cell $w={564} $h={89} $ml={19} $pl={8}><span>虚拟机栈</span><span>Java Virtual Machine Stack</span></Cell>
                    </DiagramRow>
                  </Diagram>
                </DiagramWrap>
                <Watermark>让天下没有难学的技术</Watermark>
              </Slide>
            </Viewport>
            <RightScroll>
              <ScrollBtn $mt={4}><Tri /></ScrollBtn>
              <ScrollBtn $mt={79} $h={21} />
              <ScrollBtn $mt={523}><Tri $down /></ScrollBtn>
              <DoubleArrow $mt={2}>
                <Ic w={12} h={16} sw={1.6} color="#555"><path d="M1 1h10" /><path d="M6 2l4 6H2zM6 8l4 6H2z" fill="#555" stroke="none" /></Ic>
              </DoubleArrow>
              <DoubleArrow>
                <Ic w={12} h={16} sw={1.6} color="#555"><path d="M1 15h10" /><path d="M2 2h8l-4 6zM2 8h8l-4 6z" fill="#555" stroke="none" /></Ic>
              </DoubleArrow>
            </RightScroll>
          </SlideArea>
        </Main>

        <Status>
          <Arc />
          <StatusText $w={215} $ml={10} $fs={15.5} $ls={0.95}>幻灯片 第 10 张 , 共 78 张</StatusText>
          <StatusIcon>
            <Ic w={20} h={20} sw={1.2} color="#666"><path d="M2 3c3-1 5-1 7 1v14c-2-2-4-2-7-1zM9 4c2-2 4-2 6-1v4M9 18c2-1 3-1 5-1M18 5l-6 7-1 3 3-1 6-7z" /></Ic>
          </StatusIcon>
          <StatusText $w={100} $ml={20}>中文(中国)</StatusText>
          <StatusIcon $ml={803}>
            <Ic w={20} h={20} sw={1.2} color="#666"><path d="M3 10h14M5 14h10M3 17h14" /><path d="M10 2l4 5H6z" fill="#666" stroke="none" /></Ic>
          </StatusIcon>
          <StatusText $w={18}>备</StatusText>
          <Ime>
            <LogoMark s={24} />
            <ImeText>英</ImeText>
            <Ic w={20} h={20} sw={0}><path d="M12 2c5 7 1 15-9 14 6-1 9-7 9-14z" fill="#4a94d8" /></Ic>
            <Ic w={16} h={20} sw={0}><rect x="3" y="4" width="3" height="3" fill="#4a94d8" /><path d="M11 11h3v3l-2 4h-2l1.5-4H11z" fill="#4a94d8" /></Ic>
            <Ic w={24} h={20} sw={1.4} color="#4a94d8">
              <rect x="2" y="3" width="20" height="15" fill="#e6f0fa" />
              <path d="M5 7h14M5 10.5h14M7 14h10" strokeDasharray="2 1.4" />
            </Ic>
            <Ic w={18} h={20} sw={0}><circle cx="9" cy="6" r="4.5" fill="#4a94d8" /><path d="M2 19c0-6 3-8 7-8s7 2 7 8z" fill="#4a94d8" /></Ic>
            <Ic w={20} h={20} sw={3.4} color="#4a94d8"><path d="M3 18l8-8M11 10a5 5 0 0 1 6-7l-3 3 2 3 3-2c0 4-4 6-8 4" /></Ic>
          </Ime>
          <StatusIcon $ml={1}>
            <Ic w={10} h={20} sw={1.3} color="#777"><path d="M1 3h7v6H1zM1 12h7v6H1z" /></Ic>
          </StatusIcon>
          <StatusIcon $ml={29}>
            <Ic w={20} h={22} sw={1.2} color="#777"><path d="M2 2h7c1 0 1 1 1 1s0-1 1-1h7v16h-7l-1 2-1-2H2zM10 3v15M4 6h4M4 10h4M4 14h4M12 6h4M12 10h4M12 14h4" /></Ic>
          </StatusIcon>
          <StatusIcon $ml={31}>
            <Ic w={20} h={22} sw={1.4} color="#777"><path d="M2 3h16M4 3v10h12V3M10 13v5M6 19h8" /><path d="M2 3h16v2H2z" fill="#777" /></Ic>
          </StatusIcon>
          <StatusIcon $ml={22}><Minus size={12} strokeWidth={3} color="#666" /></StatusIcon>
          <ZoomTrack><ZoomKnob /></ZoomTrack>
          <StatusIcon $ml={2}><Plus size={15} strokeWidth={3} color="#666" /></StatusIcon>
          <StatusText $w={38} $ml={16}>99%</StatusText>
          <StatusIcon $ml={14}>
            <Ic w={16} h={20} sw={1.1} color="#777"><rect x="1" y="2" width="14" height="16" /><path d="M4 5l3 3M12 5L9 8M4 15l3-3M12 15l-3-3" /></Ic>
          </StatusIcon>
        </Status>
      </Win>
    </Page>
  );
}
